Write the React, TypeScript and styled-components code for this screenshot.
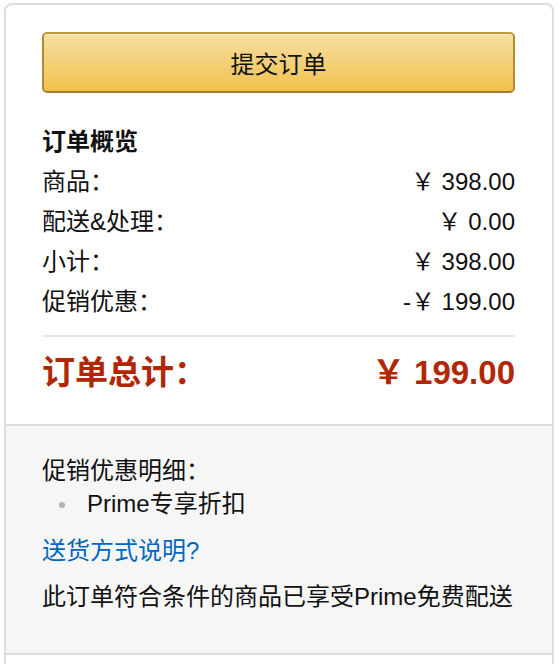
import React from "react";
import styled, { createGlobalStyle } from "styled-components";

const GlobalStyle = createGlobalStyle`
  html, body {
    margin: 0;
    padding: 0;
    height: 664px;
    overflow: hidden;
    background: #ffffff;
  }
  body {
    font-family: "Liberation Sans", "Noto Sans CJK SC", sans-serif;
    color: #111111;
  }
  * { box-sizing: border-box; }
`;

const Page = styled.div`
  padding: 3px 0 0 4px;
`;

const Card = styled.div`
  width: 550px;
  border: 2px solid #dddddd;
  border-radius: 8px;
  background: #ffffff;
  overflow: hidden;
`;

const Summary = styled.section`
  padding: 27px 37px 31px 36px;
`;

const SubmitButton = styled.button`
  display: flex;
  align-items: center;
  justify-content: center;
  width: 100%;
  height: 61px;
  padding: 0;
  border: 2px solid;
  border-color: #c09a3a #b08c35 #a1802c;
  border-radius: 5px;
  background: linear-gradient(to bottom, #f7dfa5, #f0c14b);
  box-shadow: inset 0 1px 0 rgba(255, 255, 255, 0.45);
  font-family: "Liberation Sans", "Noto Sans CJK SC", sans-serif;
  font-size: 24px;
  color: #111111;
  cursor: pointer;
`;

const Heading = styled.h3`
  margin: 29px 0 0;
  font-size: 24px;
  font-weight: 700;
  line-height: 40px;
`;

const Row = styled.div<{ $total?: boolean }>`
  display: flex;
  justify-content: space-between;
  align-items: center;
  font-size: ${(p) => (p.$total ? "33px" : "24px")};
  font-weight: ${(p) => (p.$total ? 700 : 400)};
  line-height: 40px;
  color: ${(p) => (p.$total ? "#b12704" : "#111111")};
  margin-top: ${(p) => (p.$total ? "16px" : "0")};
`;

const Divider = styled.hr`
  margin: 13px 0 0;
  border: none;
  height: 2px;
  background: #e7e7e7;
`;

const Details = styled.section`
  border-top: 2px solid #dddddd;
  background: #f6f6f6;
  padding: 28px 37px 40px 36px;
  font-size: 24px;
  line-height: 33px;
`;

const Line = styled.div<{ $gap?: number }>`
  margin-top: ${(p) => p.$gap ?? 0}px;
`;

const Bullets = styled.ul`
  list-style: none;
  margin: 0;
  padding: 0;
`;

const Bullet = styled.li`
  display: flex;
  align-items: center;
  padding-left: 17px;
  &::before {
    content: "";
    width: 6px;
    height: 6px;
    border-radius: 50%;
    background: #b3b3b3;
    margin-right: 22px;
    margin-top: 3px;
  }
`;

const Link = styled.a`
  color: #0066c0;
  text-decoration: none;
`;

const Footer = styled.section`
  border-top: 2px solid #dddddd;
  height: 40px;
  background: #ffffff;
`;

const rows: [string, string][] = [
  ["商品：", "￥ 398.00"],
  ["配送&处理：", "￥ 0.00"],
  ["小计：", "￥ 398.00"],
  ["促销优惠：", "-￥ 199.00"],
];

export default function App() {
  return (
    <>
      <GlobalStyle />
      <Page>
        <Card>
          <Summary>
            <SubmitButton type="button">提交订单</SubmitButton>
            <Heading>订单概览</Heading>
            {rows.map(([label, value]) => (
              <Row key={label}>
                <span>{label}</span>
                <span>{value}</span>
              </Row>
            ))}
            <Divider />
            <Row $total>
              <span>订单总计：</span>
              <span>￥ 199.00</span>
            </Row>
          </Summary>
          <Details>
            <Line>促销优惠明细：</Line>
            <Bullets>
              <Bullet>Prime专享折扣</Bullet>
            </Bullets>
            <Line $gap={14}>
              <Link href="#">送货方式说明?</Link>
            </Line>
            <Line $gap={13}>此订单符合条件的商品已享受Prime免费配送</Line>
          </Details>
          <Footer />
        </Card>
      </Page>
    </>
  );
}
